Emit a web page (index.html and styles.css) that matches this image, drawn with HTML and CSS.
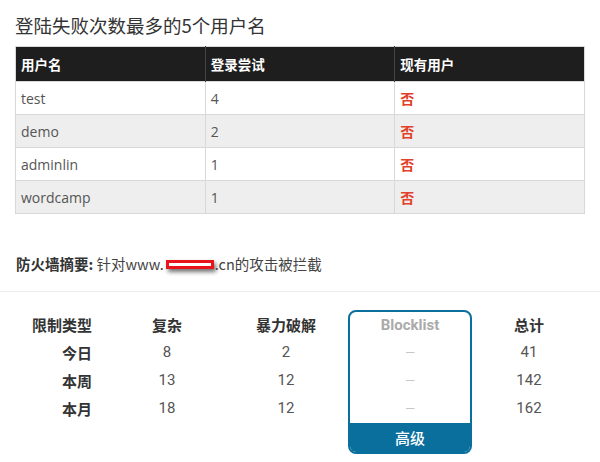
FILE: index.html
```html
<!DOCTYPE html>
<html lang="zh">
<head>
<meta charset="utf-8">
<link rel="stylesheet" href="styles.css">
</head>
<body>
<h2 class="title">登陆失败次数最多的5个用户名</h2>
<table class="users">
  <thead>
    <tr><th>用户名</th><th>登录尝试</th><th>现有用户</th></tr>
  </thead>
  <tbody>
    <tr><td>test</td><td>4</td><td class="no">否</td></tr>
    <tr class="alt"><td>demo</td><td>2</td><td class="no">否</td></tr>
    <tr><td>adminlin</td><td>1</td><td class="no">否</td></tr>
    <tr class="alt"><td>wordcamp</td><td>1</td><td class="no">否</td></tr>
  </tbody>
</table>
<p class="summary"><b>防火墙摘要:</b> 针对www.<span class="redact"></span>.cn的攻击被拦截</p>
<hr class="sep">
<div class="stats">
  <div class="col c-label">
    <div class="cell head">限制类型</div>
    <div class="cell head">今日</div>
    <div class="cell head">本周</div>
    <div class="cell head">本月</div>
  </div>
  <div class="col">
    <div class="cell head">复杂</div>
    <div class="cell">8</div>
    <div class="cell">13</div>
    <div class="cell">18</div>
  </div>
  <div class="col">
    <div class="cell head">暴力破解</div>
    <div class="cell">2</div>
    <div class="cell">12</div>
    <div class="cell">12</div>
  </div>
  <div class="col box">
    <div class="cell head muted">Blocklist</div>
    <div class="cell dash">—</div>
    <div class="cell dash">—</div>
    <div class="cell dash">—</div>
    <div class="premium">高级</div>
  </div>
  <div class="col">
    <div class="cell head">总计</div>
    <div class="cell">41</div>
    <div class="cell">142</div>
    <div class="cell">162</div>
  </div>
</div>
</body>
</html>
```

FILE: styles.css
```css
html, body {
  margin: 0;
  padding: 0;
  background: #fff;
}
body {
  font-family: "Open Sans", "Noto Sans CJK SC", sans-serif;
  color: #444;
  width: 600px;
}
.title {
  margin: 0;
  padding: 13px 0 0 15px;
  font-family: "Noto Sans CJK SC", sans-serif;
  font-weight: 400;
  font-size: 18.5px;
  line-height: 25px;
  color: #333;
}
.users {
  margin: 8px 0 0 15px;
  width: 570px;
  border-collapse: collapse;
  border: 1px solid #d8d8d8;
  table-layout: fixed;
}
.users th {
  background: #1e1e1e;
  color: #fff;
  font-family: "Noto Sans CJK SC", sans-serif;
  font-weight: 700;
  font-size: 13.5px;
  text-align: left;
  height: 34px;
  padding: 0 5px;
  border-left: 1px solid #444;
}
.users th:first-child { border-left: none; }
.users td {
  height: 32px;
  padding: 0 5px;
  font-size: 14px;
  color: #555;
  border-left: 1px solid #d8d8d8;
  border-top: 1px solid #d8d8d8;
}
.users tr.alt td { background: #eeeeee; }
.users td.no {
  color: #e2402a;
  font-family: "Noto Sans CJK SC", sans-serif;
  font-weight: 700;
}
.summary {
  margin: 39px 0 0 16px;
  font-family: "Noto Sans CJK SC", sans-serif;
  font-size: 14.5px;
  line-height: 22px;
  color: #444;
}
.summary b { color: #333; }
.redact {
  display: inline-block;
  width: 42px;
  height: 3px;
  margin: 0 1px 0 2px;
  border: 3px solid #e8141c;
  background: #fff;
  vertical-align: 1px;
  box-shadow: 2px 3px 4px rgba(0, 0, 0, 0.55);
}
.sep {
  margin: 16px 0 0 0;
  border: none;
  border-top: 1px solid #ececec;
  height: 0;
}
.stats {
  display: grid;
  grid-template-columns: 110px 114px 124px 124px 114px;
  margin-top: 18px;
  font-family: Roboto, "Noto Sans CJK SC", sans-serif;
}
.col {
  display: flex;
  flex-direction: column;
  align-items: center;
}
.c-label {
  align-items: flex-end;
  padding-right: 18px;
}
.cell {
  height: 28px;
  display: flex;
  align-items: center;
  font-size: 15px;
  color: #555;
}
.cell.head {
  font-family: "Noto Sans CJK SC", Roboto, sans-serif;
  font-weight: 700;
  color: #333;
}
.cell.muted {
  font-family: Roboto, sans-serif;
  color: #aaa;
}
.cell.dash {
  color: #c8c8c8;
  font-size: 13px;
}
.box {
  border: 2px solid #0b6f9e;
  border-radius: 8px;
  overflow: hidden;
}
.box .cell.head { height: 26px; }
.premium {
  align-self: stretch;
  height: 29px;
  margin-top: 1px;
  background: #0b6f9e;
  color: #fff;
  font-family: "Noto Sans CJK SC", sans-serif;
  font-size: 15px;
  font-weight: 500;
  display: flex;
  align-items: center;
  justify-content: center;
}
```
